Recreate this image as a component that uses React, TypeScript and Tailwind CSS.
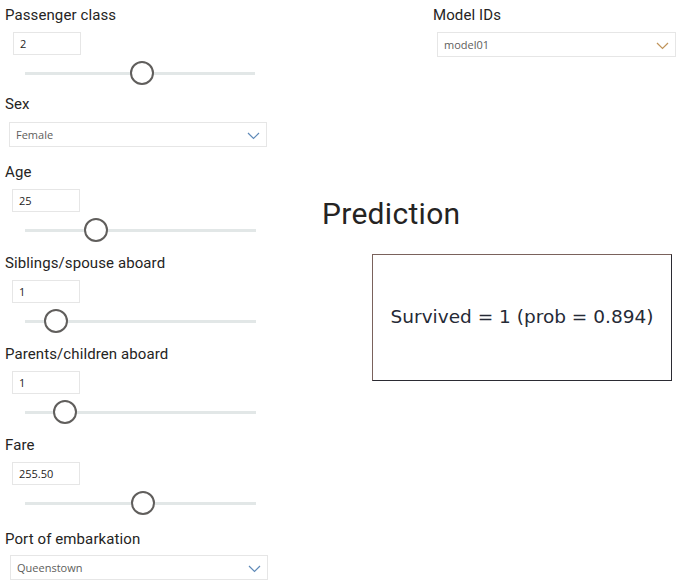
import React from "react";

const LABEL = "text-[15px] leading-5 text-[#252423] font-['Roboto',sans-serif] tracking-[0.1px]";

function Chevron({ color }: { color: string }) {
  return (
    <svg width="13" height="8" viewBox="0 0 13 8" fill="none">
      <path d="M1 1 L6.5 6.5 L12 1" stroke={color} strokeWidth="1.2" />
    </svg>
  );
}

function NumInput({ value, left }: { value: string; left: number }) {
  return (
    <div
      className="h-[23px] w-[68px] border border-[#e6e6e6] flex items-center pl-[6px] pt-[1px] text-[11px] text-[#252423] font-['Open_Sans',sans-serif]"
      style={{ marginLeft: left }}
    >
      {value}
    </div>
  );
}

function Slider({ p, width }: { p: number; width: number }) {
  return (
    <div className="h-[36px] flex items-center pl-[25px]">
      <div className="relative h-[3px] bg-[#e2e7e7]" style={{ width }}>
        <div
          className="absolute top-1/2 w-[24px] h-[24px] -translate-x-1/2 -translate-y-1/2 rounded-full bg-white border-2 border-[#605e5c]"
          style={{ left: p * width }}
        />
      </div>
    </div>
  );
}

function SliderControl({
  label,
  value,
  p,
  inputLeft = 12,
  width = 231,
  mt = 0,
}: {
  label: string;
  value: string;
  p: number;
  inputLeft?: number;
  width?: number;
  mt?: number;
}) {
  return (
    <div className="flex flex-col" style={{ marginTop: mt }}>
      <div className={`${LABEL} pl-[5px]`}>{label}</div>
      <div className="mt-[7px]">
        <NumInput value={value} left={inputLeft} />
      </div>
      <Slider p={p} width={width} />
    </div>
  );
}

function Dropdown({
  value,
  width,
  left,
  chevron,
}: {
  value: string;
  width: number;
  left: number;
  chevron: string;
}) {
  return (
    <div
      className="h-[25px] border border-[#e6e6e6] flex items-center justify-between pl-[6px] pr-[6px] pt-[2px] text-[11px] text-[#605e5c] font-['Open_Sans',sans-serif]"
      style={{ width, marginLeft: left }}
    >
      <span>{value}</span>
      <Chevron color={chevron} />
    </div>
  );
}

export default function App() {
  return (
    <div className="w-[677px] h-[588px] bg-white flex overflow-hidden">
      <div className="w-[300px] flex flex-col pt-[5px]">
        <SliderControl label="Passenger class" value="2" p={0.509} inputLeft={13} width={230} />
        <div className="flex flex-col mt-[3px]">
          <div className={`${LABEL} pl-[5px]`}>Sex</div>
          <div className="mt-[8px]">
            <Dropdown value="Female" width={258} left={9} chevron="#5f8ab8" />
          </div>
        </div>
        <SliderControl label="Age" value="25" p={0.307} mt={15} />
        <SliderControl label="Siblings/spouse aboard" value="1" p={0.134} mt={5} />
        <SliderControl label="Parents/children aboard" value="1" p={0.173} mt={5} />
        <SliderControl label="Fare" value="255.50" p={0.509} mt={5} />
        <div className="flex flex-col mt-[8px]">
          <div className={`${LABEL} pl-[5px]`}>Port of embarkation</div>
          <div className="mt-[6px]">
            <Dropdown value="Queenstown" width={258} left={10} chevron="#5f8ab8" />
          </div>
        </div>
      </div>
      <div className="flex-1 flex flex-col">
        <div className="flex flex-col pt-[5px] pl-[133px]">
          <div className={LABEL}>Model IDs</div>
          <div className="mt-[7px]">
            <Dropdown value="model01" width={239} left={4} chevron="#c0945a" />
          </div>
        </div>
        <div className="mt-[139px] pl-[22px] text-[30px] leading-9 text-[#252423] font-['Roboto',sans-serif] tracking-[0.3px]">
          Prediction
        </div>
        <div className="mt-[22px] ml-[72px] w-[300px] h-[127px] border border-t-[#7a625c] border-l-[#7a625c] border-r-[#2b2b33] border-b-[#2b2b33] flex items-center justify-center">
          <span className="text-[18.5px] text-[#252a36] font-['DejaVu_Sans',sans-serif] pb-[2px]">
            Survived = 1 (prob = 0.894)
          </span>
        </div>
      </div>
    </div>
  );
}
